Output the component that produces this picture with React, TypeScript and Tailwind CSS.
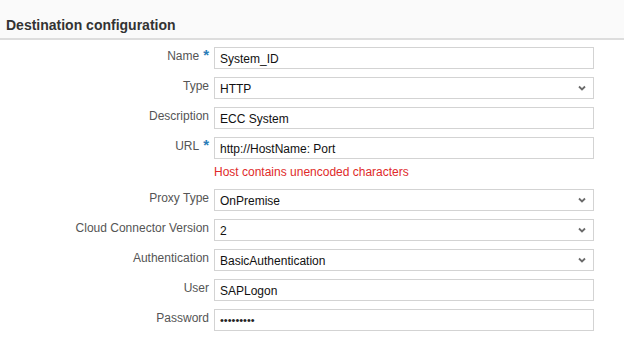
import { ReactNode } from 'react';

interface FieldProps {
  label: string;
  required?: boolean;
  children: ReactNode;
}

function Field({ label, required, children }: FieldProps) {
  return (
    <div className="flex items-start">
      <div className="w-[209px] shrink-0 pt-[2px] text-right text-[12px] leading-[14px] text-[#555]">
        {label}
        {required && (
          <span className="ml-[4px] text-[15px] font-bold leading-[12px] text-[#2a7db8]">*</span>
        )}
      </div>
      <div className="ml-[5px] w-[380px]">{children}</div>
    </div>
  );
}

function TextBox({ value, dots }: { value: string; dots?: boolean }) {
  return (
    <div
      className={
        dots
          ? 'flex h-[22px] items-center border border-[#d3d3d3] bg-white pl-[5px] text-[11px] text-[#222]'
          : 'flex h-[22px] items-center border border-[#d3d3d3] bg-white pl-[5px] pt-[1px] text-[12px] text-[#111]'
      }
    >
      {value}
    </div>
  );
}

function SelectBox({ value }: { value: string }) {
  return (
    <div className="flex h-[22px] items-center justify-between border border-[#d3d3d3] bg-white pl-[5px] pr-[7px] pt-[1px] text-[12px] text-[#111]">
      <span>{value}</span>
      <svg width="8" height="6" viewBox="0 0 8 6" className="mb-[1px]">
        <polyline points="1,1.5 4,4.5 7,1.5" fill="none" stroke="#6b6b6b" strokeWidth="1.8" />
      </svg>
    </div>
  );
}

export default function App() {
  return (
    <div className="h-[343px] w-[624px] bg-white font-[family-name:'Liberation_Sans',Arial,sans-serif]">
      {/* Header */}
      <div className="flex h-[38px] items-center bg-[#fafafa] pl-[6px] pt-[12px] text-[14px] font-bold text-[#333]">
        Destination configuration
      </div>
      <div className="h-[2px] bg-[#dddddd]" />

      {/* Form */}
      <div className="flex flex-col gap-[8px] pt-[7px]">
        <Field label="Name" required>
          <TextBox value="System_ID" />
        </Field>
        <Field label="Type">
          <SelectBox value="HTTP" />
        </Field>
        <Field label="Description">
          <TextBox value="ECC System" />
        </Field>
        <Field label="URL" required>
          <TextBox value="http://HostName: Port" />
        </Field>
        <div className="-mt-[2px] mb-[2px] flex h-[14px]">
          <div className="ml-[214px] text-[12px] leading-[14px] text-[#e02a2a]">
            Host contains unencoded characters
          </div>
        </div>
        <Field label="Proxy Type">
          <SelectBox value="OnPremise" />
        </Field>
        <Field label="Cloud Connector Version">
          <SelectBox value="2" />
        </Field>
        <Field label="Authentication">
          <SelectBox value="BasicAuthentication" />
        </Field>
        <Field label="User">
          <TextBox value="SAPLogon" />
        </Field>
        <Field label="Password">
          <TextBox value="•••••••••" dots />
        </Field>
      </div>
    </div>
  );
}
